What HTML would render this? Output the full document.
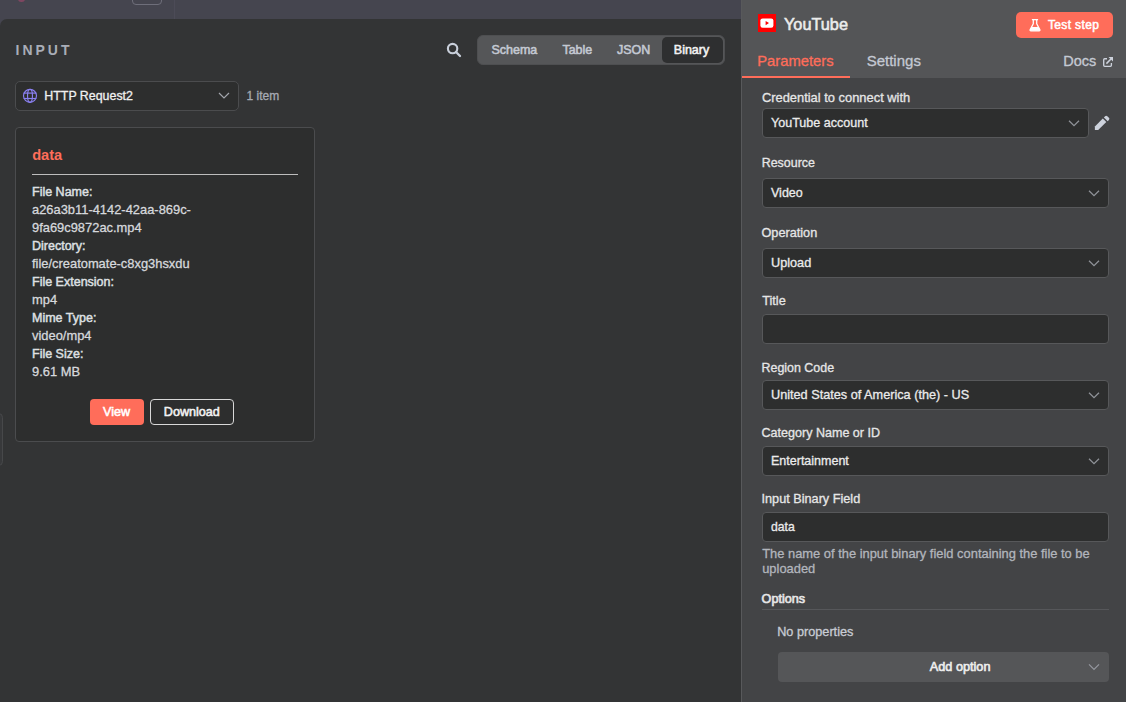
<!DOCTYPE html>
<html><head><meta charset="utf-8"><style>
html,body{margin:0;padding:0;width:1126px;height:702px;overflow:hidden;background:#333435;}
body{position:relative;font-family:"Liberation Sans",sans-serif;}
.t{position:absolute;white-space:nowrap;}
.t.n{-webkit-text-stroke:0.3px currentColor;}
.r{position:absolute;box-sizing:border-box;}
</style></head><body>
<div class="r" style="left:0px;top:0px;width:741px;height:30px;background:#45454f;border-radius:0px;"></div>
<div class="r" style="left:18px;top:-4.5px;width:6.5px;height:6.5px;background:#7e4660;border-radius:4px;"></div>
<div class="r" style="left:132px;top:-10px;width:30px;height:15px;background:transparent;border:1.2px solid #6e6e7a;border-radius:4px;box-sizing:border-box;"></div>
<div class="r" style="left:174px;top:0px;width:1px;height:19px;background:#4c4b57;border-radius:0px;"></div>
<div class="r" style="left:0px;top:19px;width:741px;height:683px;background:#333435;border-radius:0px;border-top-left-radius:7px;"></div>
<div class="t" style="left:15.5px;top:43.15px;font-size:14px;line-height:14px;font-weight:700;color:#a9adb7;letter-spacing:3px;">INPUT</div>
<svg class="r" style="left:444px;top:40px" width="20" height="20" viewBox="0 0 20 20"><circle cx="8.6" cy="8.6" r="4.7" fill="none" stroke="#c9cfdb" stroke-width="2.1"/><line x1="12" y1="12" x2="16" y2="16" stroke="#c9cfdb" stroke-width="2.3" stroke-linecap="round"/></svg>
<div class="r" style="left:477px;top:35px;width:248px;height:30px;background:#555658;border:1px solid #4e4f51;border-radius:6px;box-sizing:border-box;"></div>
<div class="r" style="left:662px;top:37px;width:61px;height:26px;background:#2e2f30;border-radius:5px;"></div>
<div class="t" style="left:491.4px;top:43.92px;font-size:12.5px;line-height:12.5px;font-weight:400;color:#c4c9d3;letter-spacing:0px;-webkit-text-stroke:0.55px currentColor;">Schema</div>
<div class="t" style="left:562.4px;top:43.92px;font-size:12.5px;line-height:12.5px;font-weight:400;color:#c4c9d3;letter-spacing:0px;-webkit-text-stroke:0.55px currentColor;">Table</div>
<div class="t" style="left:617.0px;top:43.92px;font-size:12.5px;line-height:12.5px;font-weight:400;color:#c4c9d3;letter-spacing:0px;-webkit-text-stroke:0.55px currentColor;">JSON</div>
<div class="t" style="left:673.8px;top:43.92px;font-size:12.5px;line-height:12.5px;font-weight:400;color:#f2f2f2;letter-spacing:0px;-webkit-text-stroke:0.55px currentColor;">Binary</div>
<div class="r" style="left:15px;top:81px;width:224px;height:30px;background:#2d2e2e;border:1px solid #4b4c4e;border-radius:5px;box-sizing:border-box;"></div>
<svg class="r" style="left:22px;top:88px" width="16" height="16" viewBox="0 0 16 16"><g fill="none" stroke="#8b80f2" stroke-width="1.15"><circle cx="8" cy="7.85" r="6.5"/><ellipse cx="8" cy="7.85" rx="2.45" ry="6.5"/><line x1="1.6" y1="5.1" x2="14.4" y2="5.1"/><line x1="1.6" y1="10.5" x2="14.4" y2="10.5"/></g></svg>
<div class="t n" style="left:44.3px;top:89.60px;font-size:12.4px;line-height:12.4px;font-weight:400;color:#f0f0f0;letter-spacing:0px;">HTTP Request2</div>
<svg class="r" style="left:217px;top:90px" width="14" height="12" viewBox="0 0 14 12"><path d="M2 3 L7 8 L12 3" fill="none" stroke="#a3a6ad" stroke-width="1.2"/></svg>
<div class="t n" style="left:246.5px;top:89.94px;font-size:12px;line-height:12px;font-weight:400;color:#a6aab3;letter-spacing:0px;">1 item</div>
<div class="r" style="left:15px;top:127px;width:300px;height:315px;background:#2d2e2e;border:1px solid #4b4c4e;border-radius:4px;box-sizing:border-box;"></div>
<div class="t" style="left:32.2px;top:147.74px;font-size:14.6px;line-height:14.6px;font-weight:700;color:#ff6d5a;letter-spacing:0px;">data</div>
<div class="r" style="left:32px;top:174px;width:266px;height:1px;background:#bdbdbd;border-radius:0px;"></div>
<div class="t" style="left:32px;top:186.32px;font-size:12.5px;line-height:12.5px;font-weight:400;color:#dfe0e3;letter-spacing:0px;-webkit-text-stroke:0.45px currentColor;">File Name:</div>
<div class="t n" style="left:32px;top:203.88px;font-size:12.9px;line-height:12.9px;font-weight:400;color:#d6d8dc;letter-spacing:0px;">a26a3b11-4142-42aa-869c-</div>
<div class="t n" style="left:32px;top:221.88px;font-size:12.9px;line-height:12.9px;font-weight:400;color:#d6d8dc;letter-spacing:0px;">9fa69c9872ac.mp4</div>
<div class="t" style="left:32px;top:240.32px;font-size:12.5px;line-height:12.5px;font-weight:400;color:#dfe0e3;letter-spacing:0px;-webkit-text-stroke:0.45px currentColor;">Directory:</div>
<div class="t n" style="left:32px;top:257.88px;font-size:12.9px;line-height:12.9px;font-weight:400;color:#d6d8dc;letter-spacing:0px;">file/creatomate-c8xg3hsxdu</div>
<div class="t" style="left:32px;top:276.32px;font-size:12.5px;line-height:12.5px;font-weight:400;color:#dfe0e3;letter-spacing:0px;-webkit-text-stroke:0.45px currentColor;">File Extension:</div>
<div class="t n" style="left:32px;top:293.88px;font-size:12.9px;line-height:12.9px;font-weight:400;color:#d6d8dc;letter-spacing:0px;">mp4</div>
<div class="t" style="left:32px;top:312.32px;font-size:12.5px;line-height:12.5px;font-weight:400;color:#dfe0e3;letter-spacing:0px;-webkit-text-stroke:0.45px currentColor;">Mime Type:</div>
<div class="t n" style="left:32px;top:329.88px;font-size:12.9px;line-height:12.9px;font-weight:400;color:#d6d8dc;letter-spacing:0px;">video/mp4</div>
<div class="t" style="left:32px;top:348.32px;font-size:12.5px;line-height:12.5px;font-weight:400;color:#dfe0e3;letter-spacing:0px;-webkit-text-stroke:0.45px currentColor;">File Size:</div>
<div class="t n" style="left:32px;top:365.88px;font-size:12.9px;line-height:12.9px;font-weight:400;color:#d6d8dc;letter-spacing:0px;">9.61 MB</div>
<div class="r" style="left:90px;top:399px;width:54px;height:26px;background:#ff6d5a;border-radius:4px;"></div>
<div class="t" style="left:103px;top:406.43px;font-size:12.6px;line-height:12.6px;font-weight:400;color:#ffffff;letter-spacing:0px;-webkit-text-stroke:0.55px currentColor;">View</div>
<div class="r" style="left:150px;top:399px;width:84px;height:26px;background:#2d2e2e;border:1px solid #d8d8d8;border-radius:4px;box-sizing:border-box;"></div>
<div class="t" style="left:163.8px;top:406.43px;font-size:12.6px;line-height:12.6px;font-weight:400;color:#f2f2f2;letter-spacing:0px;-webkit-text-stroke:0.55px currentColor;">Download</div>
<div class="r" style="left:-6px;top:413px;width:9px;height:53px;background:#38393b;border:1px solid #47484a;border-radius:5px;box-sizing:border-box;"></div>
<div class="r" style="left:741px;top:0px;width:385px;height:702px;background:#434446;border-radius:0px;"></div>
<div class="r" style="left:741px;top:0px;width:385px;height:78px;background:#545557;border-radius:0px;"></div>
<div class="r" style="left:741px;top:0px;width:1px;height:702px;background:#58595b;border-radius:0px;"></div>
<svg class="r" style="left:758px;top:14px" width="18" height="18" viewBox="0 0 18 18"><rect width="18" height="18" fill="#ff0000"/><rect x="2.4" y="4.4" width="13" height="9.4" rx="2.2" fill="#ffffff"/><path d="M7.6 7 L11 9.1 L7.6 11.2 Z" fill="#ff0000"/></svg>
<div class="t" style="left:784px;top:16.00px;font-size:16.3px;line-height:16.3px;font-weight:400;color:#ececec;letter-spacing:0px;-webkit-text-stroke:0.55px currentColor;">YouTube</div>
<div class="r" style="left:1016px;top:12px;width:97px;height:26px;background:#ff6d5a;border-radius:5px;"></div>
<svg class="r" style="left:1029px;top:19px" width="12" height="13" viewBox="0 0 12 13"><g fill="none" stroke="#ffffff" stroke-width="1.3" stroke-linejoin="round"><path d="M2.9 0.65 H9.1"/><path d="M4.3 0.8 V4.8 L1.2 10.6 Q0.7 11.8 1.9 11.8 H10.1 Q11.3 11.8 10.8 10.6 L7.7 4.8 V0.8"/></g><path d="M2.5 7.9 H9.5 L10.8 10.6 Q11.3 11.8 10.1 11.8 H1.9 Q0.7 11.8 1.2 10.6 Z" fill="#ffffff"/></svg>
<div class="t" style="left:1048px;top:19.24px;font-size:12.0px;line-height:12.0px;font-weight:400;color:#ffffff;letter-spacing:0.35px;-webkit-text-stroke:0.5px currentColor;">Test step</div>
<div class="t n" style="left:757.2px;top:54.17px;font-size:14.8px;line-height:14.8px;font-weight:400;color:#ff6d5a;letter-spacing:0px;">Parameters</div>
<div class="t n" style="left:866.7px;top:53.30px;font-size:15px;line-height:15px;font-weight:400;color:#c4c9d3;letter-spacing:0px;">Settings</div>
<div class="r" style="left:742px;top:76px;width:108px;height:2px;background:#ff6d5a;border-radius:0px;"></div>
<div class="t n" style="left:1063.2px;top:53.73px;font-size:14.5px;line-height:14.5px;font-weight:400;color:#c4c9d3;letter-spacing:0px;">Docs</div>
<svg class="r" style="left:0;top:0" width="1126" height="702" viewBox="0 0 1126 702"><path d="M1107 58.7 H1104.7 Q1103.7 58.7 1103.7 59.7 V65.3 Q1103.7 66.3 1104.7 66.3 H1110.4 Q1111.4 66.3 1111.4 65.3 V63" fill="none" stroke="#cdd2dc" stroke-width="1.35"/><path d="M1106.4 63.6 L1111.2 58.8" stroke="#cdd2dc" stroke-width="1.5"/><path d="M1108.5 57 H1113 V61.5 Z" fill="#cdd2dc"/></svg>
<div class="t n" style="left:761.9px;top:92.38px;font-size:12.9px;line-height:12.9px;font-weight:400;color:#e6e6e6;letter-spacing:0px;">Credential to connect with</div>
<div class="r" style="left:762px;top:108px;width:327px;height:30px;background:#2d2e2e;border:1px solid #57585a;border-radius:4px;box-sizing:border-box;"></div>
<div class="t n" style="left:771px;top:117.18px;font-size:12.55px;line-height:12.55px;font-weight:400;color:#ebebeb;letter-spacing:0px;">YouTube account</div>
<svg class="r" style="left:1067px;top:118px" width="14" height="10" viewBox="0 0 14 10"><path d="M2 2.7 L7 7.6 L12 2.7" fill="none" stroke="#909399" stroke-width="1.25"/></svg>
<svg class="r" style="left:0;top:0" width="1126" height="702" viewBox="0 0 1126 702"><path d="M1094.9 126.4 L1102.8 118.5 L1106.3 122 L1098.2 130 L1094.9 130 Z" fill="#cdd2dc"/><path d="M1103.9 117.4 L1105.1 116.2 Q1106.2 115.1 1107.3 116.2 L1108.9 117.8 Q1110 118.9 1108.9 120 L1107.7 121.2 Z" fill="#cdd2dc"/></svg>
<div class="t n" style="left:761.7px;top:157.36px;font-size:12.45px;line-height:12.45px;font-weight:400;color:#e6e6e6;letter-spacing:0px;">Resource</div>
<div class="r" style="left:762px;top:178px;width:347px;height:30px;background:#2d2e2e;border:1px solid #57585a;border-radius:4px;box-sizing:border-box;"></div>
<div class="t n" style="left:771px;top:187.22px;font-size:12.5px;line-height:12.5px;font-weight:400;color:#ebebeb;letter-spacing:0px;">Video</div>
<svg class="r" style="left:1087px;top:188px" width="14" height="10" viewBox="0 0 14 10"><path d="M2 2.7 L7 7.6 L12 2.7" fill="none" stroke="#909399" stroke-width="1.25"/></svg>
<div class="t n" style="left:761.5px;top:227.35px;font-size:12.7px;line-height:12.7px;font-weight:400;color:#e6e6e6;letter-spacing:0px;">Operation</div>
<div class="r" style="left:762px;top:248px;width:347px;height:30px;background:#2d2e2e;border:1px solid #57585a;border-radius:4px;box-sizing:border-box;"></div>
<div class="t n" style="left:771px;top:257.05px;font-size:12.7px;line-height:12.7px;font-weight:400;color:#ebebeb;letter-spacing:0px;">Upload</div>
<svg class="r" style="left:1087px;top:258px" width="14" height="10" viewBox="0 0 14 10"><path d="M2 2.7 L7 7.6 L12 2.7" fill="none" stroke="#909399" stroke-width="1.25"/></svg>
<div class="t n" style="left:762.2px;top:294.95px;font-size:12.7px;line-height:12.7px;font-weight:400;color:#e6e6e6;letter-spacing:0px;">Title</div>
<div class="r" style="left:762px;top:314px;width:347px;height:30px;background:#2d2e2e;border:1px solid #57585a;border-radius:4px;box-sizing:border-box;"></div>
<div class="t n" style="left:761.5px;top:361.66px;font-size:12.45px;line-height:12.45px;font-weight:400;color:#e6e6e6;letter-spacing:0px;">Region Code</div>
<div class="r" style="left:762px;top:380px;width:347px;height:30px;background:#2d2e2e;border:1px solid #57585a;border-radius:4px;box-sizing:border-box;"></div>
<div class="t n" style="left:771px;top:389.05px;font-size:12.7px;line-height:12.7px;font-weight:400;color:#ebebeb;letter-spacing:0px;">United States of America (the) - US</div>
<svg class="r" style="left:1087px;top:390px" width="14" height="10" viewBox="0 0 14 10"><path d="M2 2.7 L7 7.6 L12 2.7" fill="none" stroke="#909399" stroke-width="1.25"/></svg>
<div class="t n" style="left:761.5px;top:427.28px;font-size:12.55px;line-height:12.55px;font-weight:400;color:#e6e6e6;letter-spacing:0px;">Category Name or ID</div>
<div class="r" style="left:762px;top:446px;width:347px;height:30px;background:#2d2e2e;border:1px solid #57585a;border-radius:4px;box-sizing:border-box;"></div>
<div class="t n" style="left:771px;top:455.22px;font-size:12.5px;line-height:12.5px;font-weight:400;color:#ebebeb;letter-spacing:0px;">Entertainment</div>
<svg class="r" style="left:1087px;top:456px" width="14" height="10" viewBox="0 0 14 10"><path d="M2 2.7 L7 7.6 L12 2.7" fill="none" stroke="#909399" stroke-width="1.25"/></svg>
<div class="t n" style="left:761.5px;top:493.15px;font-size:12.7px;line-height:12.7px;font-weight:400;color:#e6e6e6;letter-spacing:0px;">Input Binary Field</div>
<div class="r" style="left:762px;top:512px;width:347px;height:30px;background:#2d2e2e;border:1px solid #57585a;border-radius:4px;box-sizing:border-box;"></div>
<div class="t n" style="left:771px;top:521.47px;font-size:12.2px;line-height:12.2px;font-weight:400;color:#ebebeb;letter-spacing:0px;">data</div>
<div class="t n" style="left:762.2px;top:547.78px;font-size:12.9px;line-height:12.9px;font-weight:400;color:#b2b5bc;letter-spacing:0px;">The name of the input binary field containing the file to be</div>
<div class="t n" style="left:762.2px;top:563.48px;font-size:12.9px;line-height:12.9px;font-weight:400;color:#b2b5bc;letter-spacing:0px;">uploaded</div>
<div class="t" style="left:761.6px;top:592.73px;font-size:12.6px;line-height:12.6px;font-weight:400;color:#e6e6e6;letter-spacing:0px;-webkit-text-stroke:0.65px currentColor;">Options</div>
<div class="r" style="left:762px;top:609px;width:347px;height:1px;background:#56575a;border-radius:0px;"></div>
<div class="t n" style="left:777.2px;top:626.45px;font-size:12.7px;line-height:12.7px;font-weight:400;color:#c8ccd4;letter-spacing:0px;">No properties</div>
<div class="r" style="left:778px;top:652px;width:331px;height:30px;background:#555658;border-radius:4px;"></div>
<div class="t" style="left:929.8px;top:661.05px;font-size:12.7px;line-height:12.7px;font-weight:400;color:#eeeeee;letter-spacing:0px;-webkit-text-stroke:0.6px currentColor;">Add option</div>
<svg class="r" style="left:1087px;top:661px" width="14" height="10" viewBox="0 0 14 10"><path d="M2 3.3 L7 8.3 L12 3.3" fill="none" stroke="#95989f" stroke-width="1.2"/></svg>
</body></html>
